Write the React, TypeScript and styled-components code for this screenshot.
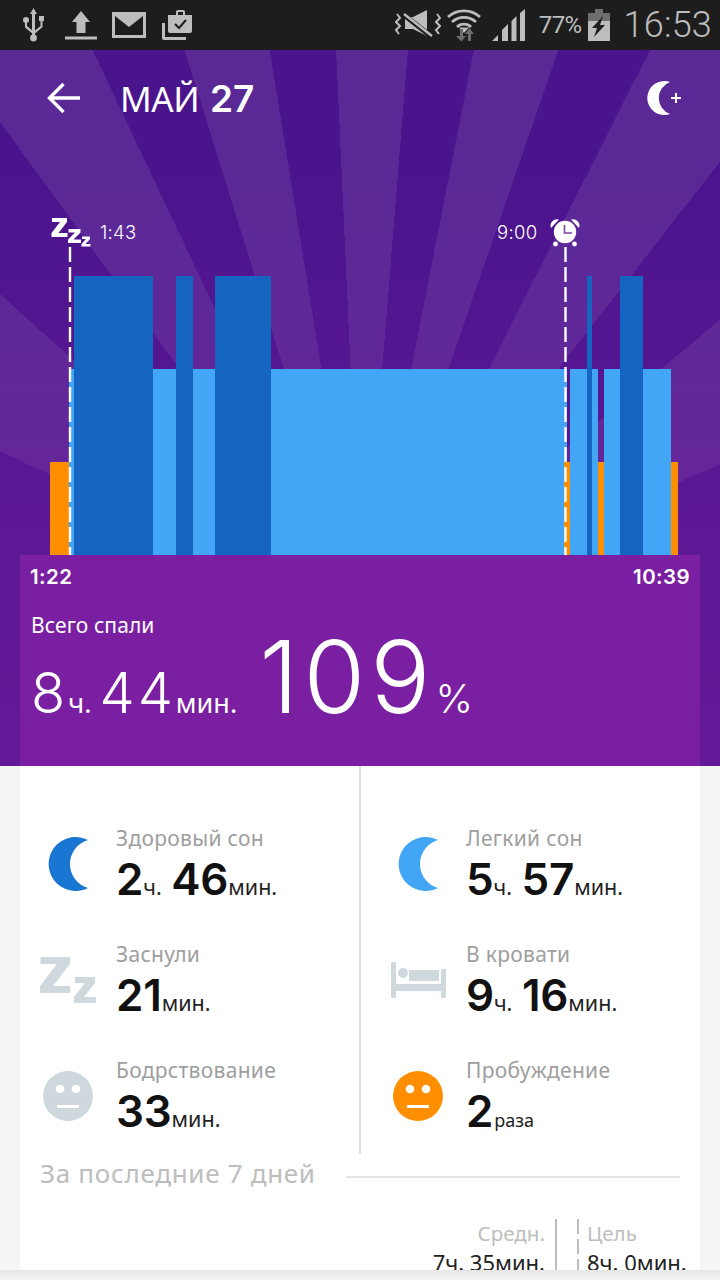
import React from "react";
import styled, { createGlobalStyle } from "styled-components";

const Global = createGlobalStyle`
  html, body { margin: 0; padding: 0; background: #f5f5f5; }
  body { font-family: "Noto Sans", "Open Sans", sans-serif; }
`;

const Screen = styled.div`
  width: 720px; height: 1280px; overflow: hidden;
  display: flex; flex-direction: column; background: #f5f5f5;
`;

/* ---------- status bar ---------- */
const StatusBar = styled.div`
  height: 50px; flex: none; background: #1d1d1d; display: flex; align-items: center;
  padding: 0 8px 0 23px; color: #bdbdbd;
`;
const Spacer = styled.div`flex: 1;`;
const StatusIcon = styled.svg<{ $gap?: number }>`
  flex: none; display: block; margin-left: ${(p) => p.$gap ?? 0}px; fill: #bdbdbd;
`;
const BatteryText = styled.span`
  font: 400 24px "Roboto", sans-serif; letter-spacing: -0.6px; margin: 0 6px 0 14px; color: #bdbdbd;
`;
const Clock = styled.span`
  font: 300 36px "Roboto", sans-serif; margin-left: 14px; color: #bdbdbd; letter-spacing: 0.2px;
`;

/* ---------- hero ---------- */
const Hero = styled.div`
  height: 716px; flex: none; display: flex; flex-direction: column;
  background:
    linear-gradient(180deg, rgba(123,31,162,0) 15%, rgba(123,31,162,.4) 70%, rgba(123,31,162,.53) 100%),
    conic-gradient(from -90deg at 362px 570px,
      transparent 0deg 25deg,
      rgba(255,255,255,.09) 25deg 42deg,
      transparent 42deg 54deg,
      rgba(255,255,255,.09) 54deg 64.7deg,
      transparent 64.7deg 72.7deg,
      rgba(255,255,255,.09) 72.7deg 80.8deg,
      transparent 80.8deg 87.4deg,
      rgba(255,255,255,.09) 87.4deg 94.6deg,
      transparent 94.6deg 101.1deg,
      rgba(255,255,255,.09) 101.1deg 109deg,
      transparent 109deg 116.8deg,
      rgba(255,255,255,.09) 116.8deg 128deg,
      transparent 128deg 140deg,
      rgba(255,255,255,.09) 140deg 156.5deg,
      transparent 156.5deg 360deg),
    #4a148c;
`;
const Header = styled.header`
  height: 96px; flex: none; display: flex; align-items: center; padding: 0 37px 0 47px;
`;
const Title = styled.h1`
  margin: 0 0 0 39px; flex: 1; color: #fff; font: 400 35px "Noto Sans", sans-serif; letter-spacing: -0.4px;
  strong { font: 600 37px "Inter", sans-serif; letter-spacing: 0; margin-left: 2px; }
`;
const ChartWrap = styled.div`position: relative; height: 409px; flex: none;`;
const ChartSvg = styled.svg`display: block;`;
const MarkerTime = styled.span<{ $left: number }>`
  position: absolute; left: ${(p) => p.$left}px; top: 75px;
  font: 300 18.5px/22px "Inter", sans-serif; letter-spacing: 0.3px; color: #fff;
`;
const SummaryPanel = styled.section`
  flex: 1; margin: 0 20px; background: #7b1fa2; color: #fff;
  display: flex; flex-direction: column; padding: 0 10px 0 11px;
`;
const TimeRow = styled.div`
  display: flex; justify-content: space-between; margin-left: -1px; margin-top: 11px;
  font: 600 20.5px/22px "Inter", sans-serif; letter-spacing: 0.4px;
`;
const TotalLabel = styled.div`
  margin-top: 23px; font: 400 21px/28px "Noto Sans", sans-serif; letter-spacing: 0.1px;
`;
const TotalRow = styled.div`
  display: flex; align-items: baseline; margin-top: -17px; white-space: pre;
`;
const TotalNum = styled.span<{ $gap?: number }>`
  font: 300 56px/110px "Inter", sans-serif; letter-spacing: 3px; margin-left: ${(p) => p.$gap ?? 0}px;
`;
const TotalUnit = styled.span`font: 400 27px "Noto Sans", sans-serif;`;
const Percent = styled.span`
  font: 300 100px/110px "Inter", sans-serif; margin-left: 22px; letter-spacing: 5px;
`;
const PercentSign = styled.span`font: 300 40px "Inter", sans-serif;`;

/* ---------- stats ---------- */
const Body = styled.main`height: 504px; flex: none; margin: 0 20px; background: #fff; overflow: hidden;`;
const StatsGrid = styled.div`display: grid; grid-template-columns: 339px 341px; height: 388px;`;
const StatsColumn = styled.div<{ $right?: boolean }>`
  display: flex; flex-direction: column; gap: 44px; padding: 58px 0 0 ${(p) => (p.$right ? "9px" : "0")};
  border-left: ${(p) => (p.$right ? "2px solid #dedede" : "none")};
`;
const StatRow = styled.div`display: flex; height: 72px;`;
const IconSlot = styled.div`
  width: 96px; flex: none; display: flex; justify-content: center; align-items: center; padding-top: 8px; height: 72px;
  box-sizing: border-box;
`;
const StatText = styled.div`display: flex; flex-direction: column;`;
const StatLabel = styled.div`font: 400 21px/28px "Noto Sans", sans-serif; color: #9e9e9e; letter-spacing: 0.3px; white-space: nowrap;`;
const StatValue = styled.div`
  display: flex; align-items: baseline; white-space: pre; margin-top: 2px; color: #111;
`;
const Num = styled.span<{ $gap?: number }>`
  font: 600 44px/50px "Inter", sans-serif; letter-spacing: -0.2px; margin-left: ${(p) => p.$gap ?? 0}px;
`;
const Unit = styled.span`font: 400 21.5px "Noto Sans", sans-serif; color: #222;`;
const Small = styled.span`font: 400 18px "Noto Sans", sans-serif; color: #222; margin-left: 1px;`;

const WeekHeader = styled.div`display: flex; align-items: center; padding: 0 20px; height: 38px;`;
const WeekTitle = styled.div`
  font: 400 26px/38px "Noto Sans", sans-serif; color: #bdbdbd; letter-spacing: 0.7px; white-space: nowrap;
`;
const WeekLine = styled.div`flex: 1; height: 2px; background: #e4e4e4; margin: 8px 0 0 30px;`;
const WeekSummary = styled.div`display: flex; justify-content: flex-end; margin-top: 27px;`;
const AvgColumn = styled.div`
  display: flex; flex-direction: column; align-items: flex-end; padding-right: 10px;
  border-right: 2px solid #bdbdbd; height: 60px;
`;
const GoalColumn = styled.div`
  width: 113px; margin-left: 20px; padding-left: 10px; height: 60px; display: flex; flex-direction: column;
  background: repeating-linear-gradient(180deg, #bdbdbd 0 15px, transparent 15px 20px) left top / 2px 100% no-repeat;
`;
const SummaryLabel = styled.div`font: 400 20.6px/29px "Noto Sans", sans-serif; color: #bdbdbd; margin-top: 0;`;
const SummaryValue = styled.div`font: 400 22px/28px "Noto Sans", sans-serif; color: #222; white-space: nowrap;`;
const BottomBar = styled.div`flex: 1; background: linear-gradient(180deg, #e6e6e6, #f3f3f3);`;

/* ---------- icons ---------- */
const Moon = ({ color }: { color: string }) => (
  <svg width="40" height="54" viewBox="0 0 40 54">
    <path d="M40 3 A27 27 0 1 0 40 51 A25 25 0 0 1 40 3 Z" fill={color} />
  </svg>
);
const Face = ({ color }: { color: string }) => (
  <svg width="50" height="50" viewBox="0 0 50 50">
    <circle cx="25" cy="25" r="25" fill={color} />
    <circle cx="17" cy="18" r="4.3" fill="#fff" />
    <circle cx="33" cy="18" r="4.3" fill="#fff" />
    <rect x="14" y="34" width="22" height="3" fill="#fff" />
  </svg>
);
const GreyZs = () => (
  <svg width="56" height="46" viewBox="0 0 56 46" fill="#cfd8dc">
    <path d="M0.500 0H30V7L13 29H30V36H0V29L17 7H0.500Z" />
    <path d="M35 20H55V26L44 40H56V46H34V40L45 26H35Z" />
  </svg>
);
const Bed = () => (
  <svg width="55" height="36" viewBox="0 0 55 36" fill="#cfd8dc">
    <rect x="0" y="0" width="5" height="36" rx="1" />
    <rect x="50" y="7" width="5" height="29" rx="1" />
    <rect x="5" y="22" width="45" height="7" />
    <circle cx="12" cy="11" r="5" />
    <path d="M18 8H48V19H18Z" />
  </svg>
);

const Row = ({ icon, label, children }: { icon: React.ReactNode; label: string; children: React.ReactNode }) => (
  <StatRow>
    <IconSlot>{icon}</IconSlot>
    <StatText>
      <StatLabel>{label}</StatLabel>
      <StatValue>{children}</StatValue>
    </StatText>
  </StatRow>
);

const deep = [[74, 153], [176, 193], [215, 271], [587, 592], [620, 643]];
const light = [[69, 564], [564, 567], [570, 598], [604, 671]];
const orange = [[50, 69], [567, 570], [598, 604], [671, 678]];

const Chart = () => (
  <ChartSvg width="720" height="409" viewBox="0 146 720 409">
    {orange.map(([a, b]) => <rect key={a} x={a} y={462} width={b - a} height={93} fill="#ff8f00" />)}
    {light.map(([a, b]) => <rect key={a} x={a} y={369} width={b - a} height={186} fill="#42a5f5" />)}
    <rect x="564" y="462" width="3" height="93" fill="#ff8f00" />
    {deep.map(([a, b]) => <rect key={a} x={a} y={276} width={b - a} height={279} fill="#1565c0" />)}
    <path d="M70 247V555M565.500 247V555" stroke="#fff" strokeWidth="2.4" strokeDasharray="15 5" />
    <g fill="#fff">
      <path d="M52 218H67V222L58.500 233H67.500V237H51.500V233L60 222H52Z" />
      <path d="M68.500 229H80.500V232.500L73.500 239.500H81V243H68V239.500L75 232.500H68.500Z" />
      <path d="M82 236.500H90V239L85.500 244H90.500V246.500H81.500V244L86 239H82Z" />
    </g>
    <g>
      <path d="M551 228 A6.500 6.500 0 0 1 559 219.500Z M579 228 A6.500 6.500 0 0 0 571 219.500Z" fill="#fff" />
      <circle cx="565" cy="232" r="11.200" fill="#fff" />
      <circle cx="555.500" cy="244" r="2.400" fill="#fff" />
      <circle cx="574.500" cy="244" r="2.400" fill="#fff" />
      <path d="M564.500 225V233H572" fill="none" stroke="#7a45a8" strokeWidth="1.600" />
    </g>
  </ChartSvg>
);

export default function App() {
  return (
    <Screen>
      <Global />
      <StatusBar>
        <StatusIcon width="21" height="34" viewBox="23 8 21 34">
          <path d="M33.500 8L37 14H35V35H32V14H30Z" />
          <circle cx="33.500" cy="38" r="3.400" />
          <circle cx="26" cy="20" r="3" />
          <rect x="39" y="16" width="5" height="5" />
          <path d="M25 20h2v6l6 5v3l-8-6.500ZM40.500 20h2v7l-8 7v-3l6-5Z" />
        </StatusIcon>
        <StatusIcon $gap={21} width="32" height="29" viewBox="65 12 32 29">
          <path d="M81 12L90 23H85.500V34H76.500V23H72Z" />
          <rect x="65" y="37.500" width="32" height="3" />
        </StatusIcon>
        <StatusIcon $gap={15} width="34" height="26" viewBox="112 12 34 26">
          <path fillRule="evenodd" d="M112 12H146V38H112ZM115 16V35H143V16L129 27Z" />
        </StatusIcon>
        <StatusIcon $gap={16} width="30" height="30" viewBox="162 9 30 30">
          <path d="M162 22H165V36H186V39H164Q162 39 162 37Z" />
          <path fillRule="evenodd" d="M176 14V11Q176 9 178 9H183Q185 9 185 11V14H192V30Q192 32 190 32H170Q168 32 168 30V14ZM178 14H183V11H178Z" />
          <path d="M175 23L179 27L186 19" fill="none" stroke="#1d1d1d" strokeWidth="2" />
        </StatusIcon>
        <Spacer />
        <StatusIcon width="46" height="32" viewBox="396 9 46 32">
          <path d="M406 17H414L428 10V36L414 29H406Z" />
          <path d="M405 15L433 37" stroke="#1d1d1d" strokeWidth="5" />
          <path d="M405 14L433 36" stroke="#bdbdbd" strokeWidth="2.500" />
          <path d="M398 14L401 18L397 22L401 26L397 30L400 34" fill="none" stroke="#bdbdbd" strokeWidth="2" />
          <path d="M438 14L441 18L437 22L441 26L437 30L440 34" fill="none" stroke="#bdbdbd" strokeWidth="2" />
        </StatusIcon>
        <StatusIcon $gap={6} width="34" height="34" viewBox="448 8 34 34">
          <path d="M449 17A24 24 0 0 1 481 17M453 22A18 18 0 0 1 477 22M458 27A10 10 0 0 1 472 27" fill="none" stroke="#bdbdbd" strokeWidth="2.800" />
          <path d="M465 33L460 27.500H470Z" />
          <path d="M461 29H464V36H467L462.500 41.500L457 36H461Z" fill="#6e6e6e" />
          <path d="M472 41H469V34H466L470.500 28L475 34H472Z" fill="#6e6e6e" />
        </StatusIcon>
        <StatusIcon $gap={11} width="33" height="32" viewBox="493 9 33 32">
          <path d="M493 41L499 35V41ZM503 41V30L509 24V41ZM512.500 41V21L517.500 16V41ZM521 41V13L526 9V41Z" />
        </StatusIcon>
        <BatteryText>77%</BatteryText>
        <StatusIcon width="22" height="32" viewBox="589 8 22 32">
          <path d="M589 12H596V8H604V12H611V20H589Z" fill="#6e6e6e" />
          <rect x="589" y="20" width="22" height="20" />
          <path d="M604 15L593 27H598L595 36L606 24H601Z" fill="#1d1d1d" />
        </StatusIcon>
        <Clock>16:53</Clock>
      </StatusBar>

      <Hero>
        <Header>
          <svg width="34" height="32" viewBox="0 0 34 32" fill="none" stroke="#fff" strokeWidth="3.400">
            <path d="M33 16H3M16.500 2L2.500 16L16.500 30" />
          </svg>
          <Title>МАЙ <strong>27</strong></Title>
          <svg width="36" height="34" viewBox="0 0 36 34" fill="#fff">
            <path d="M23 1 A17 17 0 1 0 23 33 A17 17 0 0 1 23 1 Z" />
            <path d="M24 16H28V12H30V16H34V18H30V22H28V18H24Z" />
          </svg>
        </Header>
        <ChartWrap>
          <Chart />
          <MarkerTime $left={100}>1:43</MarkerTime>
          <MarkerTime $left={497}>9:00</MarkerTime>
        </ChartWrap>
        <SummaryPanel>
          <TimeRow><span>1:22</span><span>10:39</span></TimeRow>
          <TotalLabel>Всего спали</TotalLabel>
          <TotalRow>
            <TotalNum>8</TotalNum><TotalUnit>ч. </TotalUnit>
            <TotalNum $gap={1}>44</TotalNum><TotalUnit>мин.</TotalUnit>
            <Percent>109</Percent><PercentSign>%</PercentSign>
          </TotalRow>
        </SummaryPanel>
      </Hero>

      <Body>
        <StatsGrid>
          <StatsColumn>
            <Row icon={<Moon color="#1976d2" />} label="Здоровый сон">
              <Num>2</Num><Unit>ч. </Unit><Num $gap={4}>46</Num><Unit>мин.</Unit>
            </Row>
            <Row icon={<GreyZs />} label="Заснули"><Num>21</Num><Unit>мин.</Unit></Row>
            <Row icon={<Face color="#cfd8dc" />} label="Бодрствование"><Num>33</Num><Unit>мин.</Unit></Row>
          </StatsColumn>
          <StatsColumn $right>
            <Row icon={<Moon color="#42a5f5" />} label="Легкий сон">
              <Num>5</Num><Unit>ч. </Unit><Num $gap={4}>57</Num><Unit>мин.</Unit>
            </Row>
            <Row icon={<Bed />} label="В кровати">
              <Num>9</Num><Unit>ч. </Unit><Num $gap={4}>16</Num><Unit>мин.</Unit>
            </Row>
            <Row icon={<Face color="#ff8f00" />} label="Пробуждение"><Num>2</Num><Small>раза</Small></Row>
          </StatsColumn>
        </StatsGrid>
        <WeekHeader>
          <WeekTitle>За последние 7 дней</WeekTitle>
          <WeekLine />
        </WeekHeader>
        <WeekSummary>
          <AvgColumn>
            <SummaryLabel>Средн.</SummaryLabel>
            <SummaryValue>7ч. 35мин.</SummaryValue>
          </AvgColumn>
          <GoalColumn>
            <SummaryLabel>Цель</SummaryLabel>
            <SummaryValue>8ч. 0мин.</SummaryValue>
          </GoalColumn>
        </WeekSummary>
      </Body>
      <BottomBar />
    </Screen>
  );
}
